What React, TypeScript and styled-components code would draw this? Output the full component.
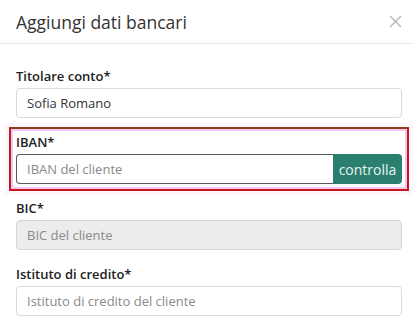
import styled, {createGlobalStyle} from 'styled-components';

const GlobalStyle = createGlobalStyle`
  html, body {
    margin: 0;
    padding: 0;
    background: #fff;
    font-family: 'Open Sans', 'Noto Sans', sans-serif;
  }
  * {
    box-sizing: border-box;
  }
`;

const Modal = styled.div`
  width: 413px;
  height: 330px;
  overflow: hidden;
  background: #fff;
`;

const Header = styled.div`
  display: flex;
  align-items: center;
  justify-content: space-between;
  height: 44px;
  padding: 0 11px 0 16px;
  border-bottom: 1px solid #e6e6e6;
`;

const Title = styled.h2`
  margin: 0;
  font-size: 17.5px;
  font-weight: 400;
  color: #333;
  line-height: 22px;
`;

const CloseButton = styled.button`
  display: flex;
  align-items: center;
  justify-content: center;
  width: 14px;
  height: 14px;
  padding: 0;
  border: none;
  background: none;
  color: #b5b5b5;
  cursor: pointer;
`;

const Body = styled.div`
  padding: 23px 11px 0 16px;
`;

const Field = styled.div<{$last?: boolean}>`
  display: flex;
  flex-direction: column;
  margin-bottom: ${(p) => (p.$last ? '0' : '15px')};
`;

const Label = styled.label`
  font-size: 13px;
  font-weight: 600;
  color: #222;
  line-height: 18px;
  margin-bottom: 3px;
`;

const Input = styled.input<{$focused?: boolean}>`
  height: 30px;
  width: 100%;
  padding: 0 10px;
  font-family: inherit;
  font-size: 13px;
  color: #333;
  background: #fff;
  border: 1px solid ${(p) => (p.$focused ? '#5a5a5a' : '#d9d9d9')};
  border-radius: 4px;
  outline: none;

  &::placeholder {
    color: #8a8a8a;
  }

  &:disabled {
    background: #ececec;
    border-color: #d6d6d6;
  }
`;

const Highlight = styled.div`
  margin: -6px -7px 8px;
  padding: 4px 5px 5px;
  border: 2px solid #c4161c;
  border-top-color: #8c3f1f;
  box-shadow: inset 0 0 0 2px #f6c9f3, 0 0 0 4px rgba(240, 180, 240, 0.12);
`;

const InputGroup = styled.div`
  display: flex;
  height: 30px;
`;

const GroupInput = styled(Input)`
  flex: 1;
  border-radius: 4px 0 0 4px;
  border-right: none;
`;

const CheckButton = styled.button`
  width: 69px;
  height: 30px;
  padding: 0;
  border: none;
  border-radius: 0 4px 4px 0;
  background: #2a7f6e;
  color: #e6f5f0;
  font-family: inherit;
  font-size: 14px;
  cursor: pointer;
`;

export default function App() {
  return (
    <>
      <GlobalStyle />
      <Modal>
        <Header>
          <Title>Aggiungi dati bancari</Title>
          <CloseButton aria-label="chiudi">
            <svg width="13" height="13" viewBox="0 0 13 13" fill="none" stroke="currentColor" strokeWidth="1.4">
              <path d="M1 1L12 12M12 1L1 12" />
            </svg>
          </CloseButton>
        </Header>
        <Body>
          <Field>
            <Label>Titolare conto*</Label>
            <Input defaultValue="Sofia Romano" />
          </Field>
          <Highlight>
            <Field $last>
              <Label>IBAN*</Label>
              <InputGroup>
                <GroupInput $focused placeholder="IBAN del cliente" />
                <CheckButton>controlla</CheckButton>
              </InputGroup>
            </Field>
          </Highlight>
          <Field>
            <Label>BIC*</Label>
            <Input disabled placeholder="BIC del cliente" />
          </Field>
          <Field>
            <Label>Istituto di credito*</Label>
            <Input placeholder="Istituto di credito del cliente" />
          </Field>
        </Body>
      </Modal>
    </>
  );
}
